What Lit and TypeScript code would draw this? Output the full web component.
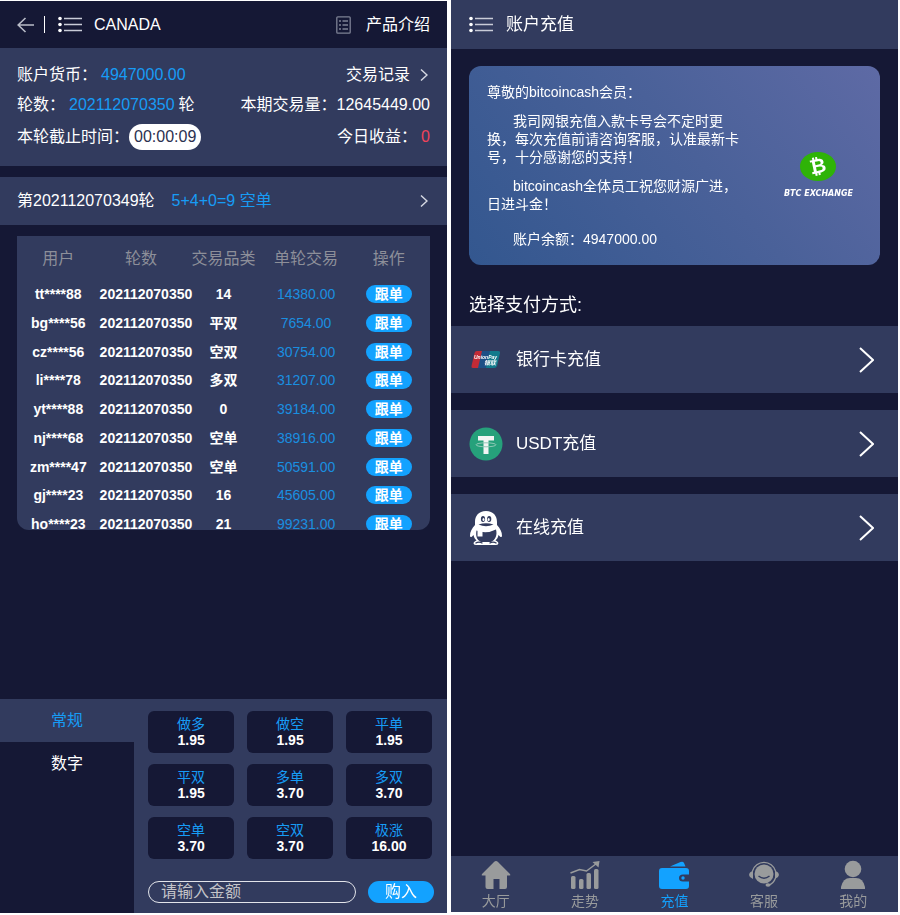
import { LitElement, html, css, svg } from "lit";
import { customElement, state } from "lit/decorators.js";
import { classMap } from "lit/directives/class-map.js";

const reset = css`
  * {
    box-sizing: border-box;
  }
  button,
  input {
    font: inherit;
    color: inherit;
    margin: 0;
    padding: 0;
    border: 0;
    background: none;
  }
  button {
    cursor: pointer;
  }
  a {
    color: inherit;
    text-decoration: none;
  }
  h1,
  h2,
  p {
    margin: 0;
    font-size: inherit;
    font-weight: normal;
  }
  svg {
    display: block;
    flex: none;
  }
`;

const menuIcon = html`<svg width="25" height="18" viewBox="0 0 25 18" aria-hidden="true">
  <g fill="#fff">
    <circle cx="2" cy="2.500" r="1.800" />
    <circle cx="2" cy="8.500" r="1.800" />
    <circle cx="2" cy="14.500" r="1.800" />
  </g>
  <path d="M6 2.500H24M6 8.500H24M6 14.500H24" stroke="#c9ccd8" stroke-width="1.300" />
</svg>`;

const smallChevron = html`<svg width="8" height="14" viewBox="0 0 8 14" aria-hidden="true">
  <path d="M1 1.500L7 7L1 12.500" fill="none" stroke="#d5d8e2" stroke-width="1.500" />
</svg>`;

interface Trade {
  user: string;
  kind: string;
  amount: string;
}

const TRADES: Trade[] = [
  { user: "tt****88", kind: "14", amount: "14380.00" },
  { user: "bg****56", kind: "平双", amount: "7654.00" },
  { user: "cz****56", kind: "空双", amount: "30754.00" },
  { user: "li****78", kind: "多双", amount: "31207.00" },
  { user: "yt****88", kind: "0", amount: "39184.00" },
  { user: "nj****68", kind: "空单", amount: "38916.00" },
  { user: "zm****47", kind: "空单", amount: "50591.00" },
  { user: "gj****23", kind: "16", amount: "45605.00" },
  { user: "ho****23", kind: "21", amount: "99231.00" },
];

const ODDS: [string, string][] = [
  ["做多", "1.95"],
  ["做空", "1.95"],
  ["平单", "1.95"],
  ["平双", "1.95"],
  ["多单", "3.70"],
  ["多双", "3.70"],
  ["空单", "3.70"],
  ["空双", "3.70"],
  ["极涨", "16.00"],
];

@customElement("trade-screen")
export class TradeScreen extends LitElement {
  @state() private tab = "常规";

  static styles = [
    reset,
    css`
      :host {
        display: flex;
        flex-direction: column;
        background: #151835;
        color: #fff;
        font-size: 16px;
        line-height: 20px;
      }
      .top {
        display: flex;
        align-items: center;
        height: 47px;
        padding: 0 17px;
      }
      .divider {
        width: 1px;
        height: 17px;
        margin: 0 13px 0 10px;
        background: #fff;
      }
      .title {
        flex: 1;
        margin-left: 11px;
      }
      .intro {
        display: flex;
        align-items: center;
        gap: 15px;
      }
      .summary {
        padding: 12px 17px;
        background: #323b5e;
      }
      .line {
        display: flex;
        align-items: center;
        justify-content: space-between;
        height: 30px;
      }
      .line.tall {
        height: 34px;
      }
      .pair {
        display: flex;
        align-items: center;
        gap: 4px;
      }
      .pair.tight {
        gap: 0;
      }
      .records {
        display: flex;
        align-items: center;
        gap: 10px;
        padding-right: 2px;
      }
      .blue {
        color: #179cf5;
      }
      .red {
        color: #f0435a;
      }
      .clock {
        height: 26px;
        padding: 0 5px;
        border-radius: 13px;
        background: #fff;
        color: #2b3150;
        line-height: 26px;
      }
      .round {
        display: flex;
        align-items: center;
        gap: 17px;
        width: 100%;
        height: 48px;
        margin-top: 11px;
        padding: 0 19px 0 17px;
        background: #323b5e;
        text-align: left;
      }
      .result {
        flex: 1;
      }
      .board {
        height: 294px;
        margin: 11px 17px 0;
        overflow-y: auto;
        scrollbar-width: none;
        border-radius: 0 0 12px 12px;
        background: #323b5e;
      }
      table {
        width: 100%;
        table-layout: fixed;
        border-collapse: collapse;
        text-align: center;
        white-space: nowrap;
      }
      th {
        height: 43px;
        padding: 2px 0 0;
        color: #8d8f99;
        font-weight: normal;
      }
      td {
        height: 29px;
        padding: 0;
        font-size: 14px;
        font-weight: bold;
        line-height: 18px;
      }
      tr:nth-child(4n) td {
        height: 28px;
      }
      td.amount {
        color: #1a8fe0;
        font-weight: normal;
      }
      .follow {
        display: block;
        width: 46px;
        height: 18px;
        margin: 0 auto;
        border-radius: 9px;
        background: #13a2ff;
        font-weight: bold;
        line-height: 18px;
      }
      .bet {
        display: grid;
        grid-template-columns: minmax(0, 3fr) minmax(0, 7fr);
        margin-top: auto;
        background: #323b5e;
      }
      .tabs {
        display: flex;
        flex-direction: column;
        background: #151835;
      }
      .tab {
        height: 43px;
      }
      .tab.on {
        background: #323b5e;
        color: #179cf5;
      }
      .panel {
        padding: 12px 13px 10px 14px;
      }
      .odds {
        display: grid;
        grid-template-columns: repeat(3, 1fr);
        gap: 11px 13px;
        padding-right: 2px;
      }
      .odd {
        height: 42px;
        border-radius: 6px;
        background: #151835;
        font-size: 14px;
        line-height: 16px;
      }
      .odd span,
      .odd b {
        display: block;
      }
      .odd span {
        color: #179cf5;
      }
      .buy {
        display: flex;
        gap: 12px;
        margin-top: 22px;
      }
      .money {
        flex: 1;
        min-width: 0;
        height: 22px;
        padding: 0 12px;
        border: 1px solid #e2e4ea;
        border-radius: 11px;
      }
      .money::placeholder {
        color: #c3c3c8;
        opacity: 1;
      }
      .go {
        width: 66px;
        height: 22px;
        border-radius: 11px;
        background: #13a2ff;
        line-height: 22px;
      }
    `,
  ];

  render() {
    return html`
      <header class="top">
        <button aria-label="返回">
          <svg width="17" height="16" viewBox="0 0 17 16" fill="none" stroke="#b9bcc8" stroke-width="1.600">
            <path d="M8.500 1L1.200 8L8.500 15M1.200 8H17" />
          </svg>
        </button>
        <span class="divider"></span>
        <button aria-label="菜单">${menuIcon}</button>
        <h1 class="title">CANADA</h1>
        <a class="intro" href="#intro">
          <svg width="15" height="18" viewBox="0 0 15 18" fill="none" stroke="#7d8194" stroke-width="1.300">
            <rect x="0.800" y="0.800" width="13.400" height="16.400" rx="1" />
            <path d="M3 5H5M6.500 5H12M3 9H5M6.500 9H12M3 13H5M6.500 13H12" />
          </svg>
          产品介绍
        </a>
      </header>

      <section class="summary">
        <div class="line">
          <span class="pair">账户货币：<span class="blue">4947000.00</span></span>
          <a class="records" href="#records">交易记录 ${smallChevron}</a>
        </div>
        <div class="line">
          <span class="pair">轮数：<span class="blue">202112070350</span>轮</span>
          <span>本期交易量：12645449.00</span>
        </div>
        <div class="line tall">
          <span class="pair tight">本轮截止时间：<time class="clock">00:00:09</time></span>
          <span class="pair">今日收益：<span class="red">0</span></span>
        </div>
      </section>

      <button class="round">
        <span>第202112070349轮</span>
        <span class="blue result">5+4+0=9 空单</span>
        ${smallChevron}
      </button>

      <div class="board">
        <table>
          <thead>
            <tr>
              <th>用户</th>
              <th>轮数</th>
              <th>交易品类</th>
              <th>单轮交易</th>
              <th>操作</th>
            </tr>
          </thead>
          <tbody>
            ${TRADES.map(
              (t) => html`<tr>
                <td>${t.user}</td>
                <td>202112070350</td>
                <td>${t.kind}</td>
                <td class="amount">${t.amount}</td>
                <td><button class="follow">跟单</button></td>
              </tr>`
            )}
          </tbody>
        </table>
      </div>

      <section class="bet">
        <div class="tabs">
          ${["常规", "数字"].map(
            (name) => html`<button
              class=${classMap({ tab: true, on: name === this.tab })}
              @click=${() => (this.tab = name)}
            >
              ${name}
            </button>`
          )}
        </div>
        <div class="panel">
          <div class="odds">
            ${ODDS.map(([name, rate]) => html`<button class="odd"><span>${name}</span><b>${rate}</b></button>`)}
          </div>
          <div class="buy">
            <input class="money" type="text" aria-label="金额" placeholder="请输入金额" />
            <button class="go">购入</button>
          </div>
        </div>
      </section>
    `;
  }
}

const unionPay = svg`
  <path d="M8 8H14L10 25H4Q2 25 2.500 23L5.500 10Q6 8 8 8Z" fill="#c22b36" />
  <path d="M13 8H22L18 25H9Z" fill="#1d4f86" />
  <path d="M21 8H29Q31.500 8 31 10L28 23Q27.500 25 25 25H17Z" fill="#127a8c" />
  <text x="5" y="16" font-size="5" font-weight="bold" font-style="italic" fill="#fff">UnionPay</text>
  <text x="15" y="22" font-size="6" font-weight="bold" font-style="italic" fill="#fff">银联</text>`;

const tether = svg`
  <circle cx="17" cy="17" r="16.500" fill="#26a17b" />
  <path d="M9 9H25V13.500H19.500V27H14.500V13.500H9Z" fill="#f2f5f4" />
  <ellipse cx="17" cy="17.800" rx="10" ry="2" fill="none" stroke="#8fc9b6" stroke-width="1" />`;

const penguin = svg`
  <path d="M17 0C9.500 0 6 5 6 11V14C3 17 .8 21 1 25C1.200 27 3 26 4.500 24C5 26.500 6 28 7.500 29.500C4 30.500 3.500 34 7 34H27C30.500 34 30 30.500 26.500 29.500C28 28 29 26.500 29.500 24C31 26 32.800 27 33 25C33.200 21 31 17 28 14V11C28 5 24.500 0 17 0Z" fill="#fff" />
  <ellipse cx="14" cy="8" rx="2.100" ry="3" fill="#323b5e" />
  <ellipse cx="20.200" cy="8" rx="2.100" ry="3" fill="#323b5e" />
  <ellipse cx="14.500" cy="8.500" rx="1" ry="1.600" fill="#fff" />
  <ellipse cx="19.700" cy="8.500" rx="1" ry="1.600" fill="#fff" />
  <path d="M9.500 13.500Q17 11 24.500 13.500Q17 17 9.500 13.500Z" fill="#323b5e" />
  <path d="M7.500 19.500Q17 23.500 27 18.500C28.500 24 26.500 29 22 31H12C7.500 29 6.500 24 7.500 19.500Z" fill="#323b5e" />
  <path d="M8.500 19V25.500H13.500V20Z" fill="#fff" />
  <path d="M6.500 32.300Q10 29.800 13.500 32.300M20.500 32.300Q24 29.800 27.500 32.300" fill="none" stroke="#323b5e" stroke-width="1.200" />`;

const METHODS = [
  { id: "bank", name: "银行卡充值", icon: unionPay },
  { id: "usdt", name: "USDT充值", icon: tether },
  { id: "online", name: "在线充值", icon: penguin },
];

const NAV = [
  {
    id: "hall",
    name: "大厅",
    icon: svg`<path d="M15 1Q16 1 17 2L29 14Q30 15.500 28.500 15.500H26V27Q26 29 24 29H18.500V19H12.500V29H6.500Q4.500 29 4.500 27V15.500H1.500Q0 15.500 1 14L13 2Q14 1 15 1Z" fill="currentColor" />`,
  },
  {
    id: "trend",
    name: "走势",
    icon: svg`<g fill="currentColor"><rect x="1" y="16" width="4.500" height="13" rx="1.500" /><rect x="9" y="19" width="4.500" height="10" rx="1.500" /><rect x="16.500" y="13" width="4.500" height="16" rx="1.500" /><rect x="24" y="9" width="4.500" height="20" rx="1.500" /><path d="M22.500 2L29.500 1L28.500 7.500Z" /></g><path d="M.5 13L9.500 9.500L16.500 11L26.500 3.500" fill="none" stroke="currentColor" stroke-width="1.500" />`,
  },
  {
    id: "recharge",
    name: "充值",
    icon: svg`<g fill="currentColor"><path d="M11 6.500L21.500 2Q24 1 25 3L26.500 6.500Z" /><path d="M3 8H27Q30 8 30 11V14.500H24Q20 14.500 20 18Q20 21.500 24 21.500H30V26Q30 29 27 29H3Q0 29 0 26V11Q0 8 3 8Z" /><circle cx="24" cy="18" r="1.700" /></g>`,
  },
  {
    id: "service",
    name: "客服",
    icon: svg`<circle cx="15" cy="14" r="9.500" fill="currentColor" /><path d="M3.500 11A12 12 0 0 1 26.500 11M26.500 18Q24.500 24 19 25.500" fill="none" stroke="currentColor" stroke-width="1.300" /><path d="M9.500 16Q15 20.500 20.500 16" fill="none" stroke="#323b5e" stroke-width="1.500" /><path d="M4 10.500V19L1 17Q-.8 14.800 1 12.500ZM26 10.500V19L29 17Q30.800 14.800 29 12.500Z" fill="currentColor" /><ellipse cx="19" cy="25" rx="2.500" ry="1.800" fill="currentColor" />`,
  },
  {
    id: "mine",
    name: "我的",
    icon: svg`<circle cx="15" cy="9" r="8.300" fill="currentColor" /><path d="M3 29V27Q5 18 12 18H18Q25 18 27 27V29Z" fill="currentColor" />`,
  },
];

@customElement("recharge-screen")
export class RechargeScreen extends LitElement {
  static styles = [
    reset,
    css`
      :host {
        display: flex;
        flex-direction: column;
        background: #151835;
        color: #fff;
        font-size: 17px;
        line-height: 20px;
      }
      .top {
        display: flex;
        align-items: center;
        gap: 12px;
        height: 49px;
        padding: 0 18px;
        background: #323b5e;
      }
      .card {
        display: flex;
        align-items: center;
        justify-content: space-between;
        min-height: 199px;
        margin: 17px 18px 0;
        padding: 0 27px 0 18px;
        border-radius: 12px;
        background: linear-gradient(50deg, #33578f 0%, #4a6199 55%, #5e6aa5 100%);
      }
      .message {
        flex: 0 1 260px;
        font-size: 14px;
        line-height: 18px;
      }
      .message p + p {
        margin-top: 11px;
        text-indent: 26px;
      }
      .message p.balance {
        margin-top: 17px;
      }
      .brand {
        display: flex;
        flex-direction: column;
        align-items: center;
        gap: 9px;
        padding-top: 18px;
      }
      .coin {
        width: 36px;
        height: 29px;
        border-radius: 50%;
        background: #2fb307;
        font: bold 20px/29px "DejaVu Sans", sans-serif;
        text-align: center;
      }
      .symbol {
        display: block;
        transform: rotate(-12deg);
      }
      .brand-name {
        font: italic bold 8px/8px "DejaVu Sans", sans-serif;
        white-space: nowrap;
      }
      .heading {
        margin: 30px 18px 11px;
        font-size: 18px;
      }
      .methods {
        display: grid;
        gap: 17px;
      }
      .method {
        display: flex;
        align-items: center;
        gap: 13px;
        height: 67px;
        padding: 0 24px 0 18px;
        background: #323b5e;
      }
      .method-name {
        flex: 1;
      }
      .nav {
        display: grid;
        grid-template-columns: repeat(5, 1fr);
        margin-top: auto;
        background: #323b5e;
        color: #999b9c;
        font-size: 14px;
      }
      .item {
        display: flex;
        flex-direction: column;
        align-items: center;
        gap: 1px;
        height: 56px;
        padding-top: 4px;
      }
      .item.on {
        color: #13a2ff;
      }
    `,
  ];

  render() {
    return html`
      <header class="top">
        <button aria-label="菜单">${menuIcon}</button>
        <h1>账户充值</h1>
      </header>

      <section class="card">
        <div class="message">
          <p>尊敬的bitcoincash会员：</p>
          <p>我司网银充值入款卡号会不定时更换，每次充值前请咨询客服，认准最新卡号，十分感谢您的支持！</p>
          <p>bitcoincash全体员工祝您财源广进，日进斗金！</p>
          <p class="balance">账户余额：4947000.00</p>
        </div>
        <div class="brand">
          <div class="coin"><span class="symbol">₿</span></div>
          <div class="brand-name">BTC EXCHANGE</div>
        </div>
      </section>

      <h2 class="heading">选择支付方式:</h2>
      <div class="methods">
        ${METHODS.map(
          (m) => html`<a class="method" href="#${m.id}">
            <svg width="34" height="34" viewBox="0 0 34 34" aria-hidden="true">${m.icon}</svg>
            <span class="method-name">${m.name}</span>
            <svg width="15" height="26" viewBox="0 0 15 26" aria-hidden="true">
              <path d="M1 1L14 13L1 25" fill="none" stroke="#fff" stroke-width="2" />
            </svg>
          </a>`
        )}
      </div>

      <nav class="nav">
        ${NAV.map(
          (n) => html`<a class=${classMap({ item: true, on: n.id === "recharge" })} href="#${n.id}">
            <svg width="30" height="30" viewBox="0 0 30 30" aria-hidden="true">${n.icon}</svg>
            <span>${n.name}</span>
          </a>`
        )}
      </nav>
    `;
  }
}

@customElement("app-root")
export class AppRoot extends LitElement {
  static styles = css`
    :host {
      display: grid;
      grid-template-columns: 1fr 1fr;
      gap: 4px;
      box-sizing: border-box;
      min-height: 100vh;
      padding: 0 2px 2px 0;
      background: #fff;
      font-family: "Liberation Sans", "Noto Sans CJK SC", sans-serif;
    }
    .left {
      margin-top: 1px;
    }
    .right {
      margin-bottom: 1px;
    }
  `;

  render() {
    return html`
      <trade-screen class="left"></trade-screen>
      <recharge-screen class="right"></recharge-screen>
    `;
  }
}
